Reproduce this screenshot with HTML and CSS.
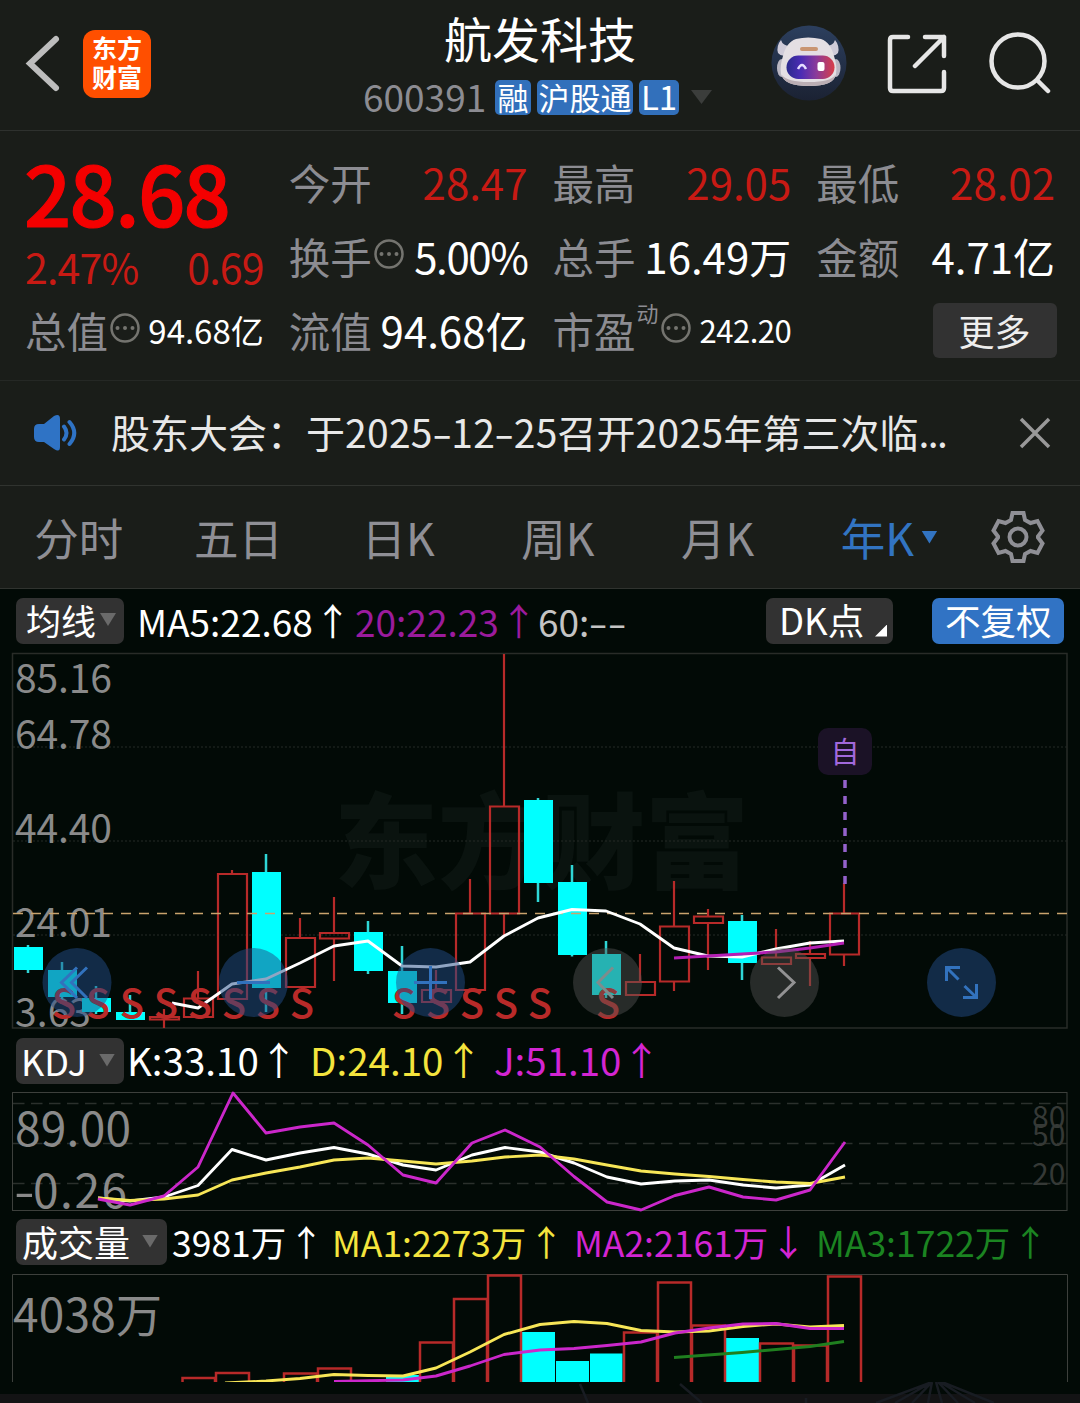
FILE: index.html
```html
<!DOCTYPE html>
<html lang="zh-CN">
<head>
<meta charset="utf-8">
<title>航发科技 600391</title>
<link rel="stylesheet" href="styles.css">
</head>
<body>
<header class="topbar">
  <div class="top-left">
    <svg class="back" width="40" height="60" viewBox="0 0 40 60"><path d="M33 6 7 30.500 33 55" fill="none" stroke="#bdbdbd" stroke-width="6" stroke-linecap="round"/></svg>
    <div class="logo"><span>东方</span><span>财富</span></div>
  </div>
  <div class="heading">
    <h1>航发科技</h1>
    <div class="sub"><span class="code">600391</span><span class="tag">融</span><span class="tag wide">沪股通</span><span class="tag level">L1</span><i class="tri"></i></div>
  </div>
  <div class="top-right">
    <svg width="76" height="76" viewBox="0 0 76 76">
      <defs><linearGradient id="visor"><stop offset="0" stop-color="#2b2a8c"/><stop offset=".3" stop-color="#4b2cb4"/><stop offset=".62" stop-color="#8a3a9a"/><stop offset="1" stop-color="#d83e48"/></linearGradient>
      <linearGradient id="halo" x2="0" y2="1"><stop offset="0" stop-color="#2c3f5e"/><stop offset="1" stop-color="#1b2233"/></linearGradient></defs>
      <circle cx="38" cy="38" r="37.500" fill="url(#halo)"/>
      <path d="M10 15Q5 21 7 28q3 4 10 2l5-9Q12 22 10 15zM64 15q5 6 3 13-3 4-10 2l-5-9q10 1 12-6z" fill="#cfcbd8"/>
      <ellipse cx="10.500" cy="43" rx="4.500" ry="9" fill="#b9b6c2"/><ellipse cx="65" cy="43" rx="4.500" ry="9" fill="#b9b6c2"/>
      <path d="M25 14q12-3 25 0c7 2 11 9 13 17 2 6 3 12 2 18-1 8-10 12-27 12S12 57 10 49c-1-6 0-12 2-18 2-8 6-15 13-17z" fill="#e4dfe3"/>
      <path d="M11 50q5 7 27 7t26-7q-1 11-26 11T11 50z" fill="#bbaeb4"/>
      <rect x="29" y="22" width="18" height="4" rx="2" fill="#c99572"/>
      <rect x="15.500" y="30.500" width="48" height="23.500" rx="11.700" fill="url(#visor)"/>
      <path d="M27 44q4-8 8 0" fill="none" stroke="#e6dcff" stroke-width="2.500"/><rect x="46.500" y="37" width="7" height="9" rx="2" fill="#fff"/>
    </svg>
    <svg width="62" height="62" viewBox="0 0 62 62" fill="none" stroke="#e6e6e6" stroke-width="4.500" stroke-linecap="round" stroke-linejoin="round"><path d="M23 5H8Q5 5 5 8V56Q5 59 8 59H56Q59 59 59 56V40M40 5H59V24M30 34 59 5"/></svg>
    <svg width="64" height="64" viewBox="0 0 64 64" fill="none" stroke="#e6e6e6" stroke-width="4.500" stroke-linecap="round"><circle cx="31" cy="30" r="26.500"/><path d="M51 50 61 60"/></svg>
  </div>
</header>

<section class="quote">
  <div class="col">
    <div class="price">28.68</div>
    <div class="row change"><span>2.47%</span><span>0.69</span></div>
    <div class="row"><span class="label">总值</span><svg class="dots" viewBox="0 0 30 30"><circle cx="15" cy="15" r="13.500"/><path d="M7.500 15h.01M15 15h.01M22.500 15h.01"/></svg><b class="small">94.68亿</b></div>
  </div>
  <div class="col">
    <div class="row"><span class="label">今开</span><b class="up">28.47</b></div>
    <div class="row"><span class="label">换手</span><svg class="dots" viewBox="0 0 30 30"><circle cx="15" cy="15" r="13.500"/><path d="M7.500 15h.01M15 15h.01M22.500 15h.01"/></svg><b class="pct">5.00%</b></div>
    <div class="row"><span class="label">流值</span><b>94.68亿</b></div>
  </div>
  <div class="col">
    <div class="row"><span class="label">最高</span><b class="up">29.05</b></div>
    <div class="row"><span class="label">总手</span><b>16.49万</b></div>
    <div class="row"><span class="label">市盈</span><sup>动</sup><svg class="dots" viewBox="0 0 30 30"><circle cx="15" cy="15" r="13.500"/><path d="M7.500 15h.01M15 15h.01M22.500 15h.01"/></svg><b class="pe">242.20</b></div>
  </div>
  <div class="col">
    <div class="row"><span class="label">最低</span><b class="up">28.02</b></div>
    <div class="row"><span class="label">金额</span><b>4.71亿</b></div>
    <div class="row last"><button class="more">更多</button></div>
  </div>
</section>

<section class="news">
  <svg width="46" height="40" viewBox="0 0 46 40"><path d="M6 11H11L21 3Q27 0 27 6V34Q27 40 21 36L11 29H6Q1 29 1 24V16Q1 11 6 11Z" fill="#2f73c5"/><path d="M31 13.500Q36 20 31 26.500M36.500 9Q46 20 36.500 31" fill="none" stroke="#2f73c5" stroke-width="4" stroke-linecap="round"/></svg>
  <p>股东大会：于<span class="num">2025<i>-</i>12<i>-</i>25</span>召开<span class="num">2025</span>年第三次临<span class="ell">...</span></p>
  <svg width="34" height="34" viewBox="0 0 34 34"><path d="M3 3 31 31M31 3 3 31" stroke="#999" stroke-width="3.500"/></svg>
</section>

<nav class="tabs">
  <span>分时</span><span>五日</span><span>日K</span><span>周K</span><span>月K</span><span class="active">年K<i class="tri"></i></span>
  <div class="gear"><svg width="56" height="56" viewBox="0 0 56 56" fill="none" stroke="#8f8f95" stroke-width="4"><path d="M22.500 4H33.500L35 11 40.500 14 47.500 12 52.500 21.500 48 27.500V28.500L52.500 34.500 47.500 44 40.500 42 35 45 33.500 52H22.500L21 45 15.500 42 8.500 44 3.500 34.500 8 28.500V27.500L3.500 21.500 8.500 12 15.500 14 21 11Z"/><circle cx="28" cy="28" r="8.500"/></svg></div>
</nav>

<main class="charts">
  <div class="legend ma">
    <button class="chip">均线<i class="tri"></i></button>
    <span class="white">MA5:22.68<em>↑</em></span><span class="violet">20:22.23<em>↑</em></span><span class="grey">60:<i class="hy">-</i><i class="hy">-</i></span>
    <button class="chip dk">DK点<i class="corner"></i></button>
    <button class="chip blue">不复权</button>
  </div>
  <svg class="plot open" width="1080" height="382" viewBox="0 652 1080 382">
    <text x="334" y="881" class="mark" textLength="415">东方财富</text>
    <rect x="12.500" y="653.500" width="1054.500" height="374.500" class="frame"/>
    <path d="M13 747H1067M13 841H1067M13 935H1067" class="dotted"/>
    <g class="axis"><text x="15" y="692.500" textLength="97">85.16</text><text x="15" y="748.500" textLength="97">64.78</text><text x="15" y="842.500" textLength="97">44.40</text><text x="15" y="936.500" textLength="97">24.01</text><text x="15" y="1027" textLength="76">3.63</text></g>
    <g class="fall-wick"><path d="M28 945V973M62 962V1000M96 986V1014M130 995V1020M266 854V1012M368 921V974M402 946V1014M538 798V902M572 865V956.500M606 941V998M742 915V980"/></g>
    <g class="fall"><path d="M14 947h29v23h-29zM48 970h29v27h-29zM82 998h29v14h-29zM116 1012h29v8h-29zM252 872h29v116h-29zM354 932h29v39h-29zM388 971h29v32h-29zM524 800h29v83h-29zM558 882h29v73h-29zM592 954h29v41h-29zM728 921h29v42h-29z"/></g>
    <g class="rise"><path d="M150 1017h29v2.500h-29zM184 998.500h29v18.500h-29zM218 874h29v125h-29zM286 938h29v49h-29zM320 933h29v5.500h-29zM422 990h29v12h-29zM456 913.500h29v76.500h-29zM490 806.500h29v107h-29zM626 982h29v13h-29zM660 926.500h29v55h-29zM694 916.500h29v6.500h-29zM762 957.500h29v6.500h-29zM796 954h29v4h-29zM830 913.500h29v41h-29z"/>
    <path d="M164 1009V1017M164 1020V1028M198 971V998M232 870V874M300 918V938M334 897V933M334 939V981M436 970V990M470 879V913M504 654V806M504 914V937M640 954V982M674 881V926M674 982V991M708 909V916M708 923V970M776 929V957M810 941V954M810 958V986M844 883V913M844 955V966"/></g>
    <path d="M13 913.500H1067" class="last-price"/>
    <path d="M172 1003 198 1008 232 984 266 979 300 963 334 946 368 941 402 966 436 967 470 962 504 936 538 918 572 909.500 606 911 640 924 674 948 708 956 742 957 776 949 810 943 844 941" class="line white-line"/>
    <path d="M674 958 708 956 742 954 776 952 810 948 844 943" class="line violet-line"/>
    <g class="sig"><text x="64" y="1018">S</text><text x="98" y="1018">S</text><text x="132" y="1018">S</text><text x="166" y="1018">S</text><text x="200" y="1018">S</text><text x="234" y="1018">S</text><text x="268" y="1018">S</text><text x="302" y="1018">S</text><text x="404" y="1018">S</text><text x="438" y="1018">S</text><text x="472" y="1018">S</text><text x="506" y="1018">S</text><text x="540" y="1018">S</text><text x="608" y="1018">S</text></g>
    <rect x="818" y="728" width="54" height="47" rx="10" fill="#1b1226"/>
    <text x="845" y="763" class="self">自</text>
    <path d="M845 780V884" stroke="#9462cc" stroke-width="3.500" stroke-dasharray="8 8"/>
    <g fill="#224c87" fill-opacity=".5"><circle cx="77" cy="982.500" r="34.500"/><circle cx="253.500" cy="982.500" r="34.500"/><circle cx="430.500" cy="982.500" r="34.500"/><circle cx="961.500" cy="982.500" r="34.500"/></g>
    <g fill="#555" fill-opacity=".45"><circle cx="607.500" cy="982.500" r="34.500"/><circle cx="784.500" cy="982.500" r="34.500"/></g>
    <g fill="none" stroke="#3272bd" stroke-width="3"><path d="M77 967.500 61.500 982.500 77 998M87 967.500 71.500 982.500 87 998M237 982.500H270M414 982.500H447M430.500 966V999"/><path d="M946.500 981V967.500H960M946.500 967.500 958.500 979.500M963 997.500H976.500V984M976.500 997.500 964.500 986" stroke-width="3"/></g>
    <path d="M613 967.500 598 982.500 613 998" fill="none" stroke="#7e8d8d" stroke-width="3"/><path d="M778 967.500 794 982.500 778 998" fill="none" stroke="#929293" stroke-width="3"/>
  </svg>

  <div class="legend kdj">
    <button class="chip">KDJ<i class="tri"></i></button>
    <span class="white">K:33.10<em>↑</em></span><span class="yellow">D:24.10<em>↑</em></span><span class="pink">J:51.10<em>↑</em></span>
  </div>
  <svg class="plot open" width="1080" height="126" viewBox="0 1088 1080 126">
    <rect x="12.500" y="1092.500" width="1054.500" height="118" class="frame bright"/>
    <path d="M13 1103.500H1067M13 1143.500H1067M13 1183.500H1067" class="dash"/>
    <g class="axis big"><text x="15" y="1145.500" textLength="116">89.00</text><text x="33" y="1208" textLength="94">0.26</text><text transform="translate(14 1208) scale(1.300 1)">-</text></g>
    <g class="axis level"><text x="1032" y="1128">80</text><text x="1032" y="1146">50</text><text x="1032" y="1185">20</text></g>
    <path d="M98 1198 130 1201 164 1197 198 1185.500 232 1149.500 266 1160 300 1153 334 1147.500 368 1154 403 1165 436 1170 472 1155 505 1147.500 540 1152 574 1163 607 1177 641 1184 675 1181 709 1180 743 1185 776 1188 810 1185 845 1165" class="line white-line"/>
    <path d="M98 1198 130 1200.500 164 1199 198 1195 232 1180 266 1173 300 1167 334 1160 368 1158 403 1161 436 1164 472 1161 505 1157 540 1155 574 1159 607 1165 641 1171 675 1174 709 1176.500 743 1179.500 776 1182 810 1183.500 845 1177" class="line yellow-line"/>
    <path d="M98 1199 130 1205 164 1196 198 1167 233 1093 266 1133 300 1127 334 1123 368 1145 403 1175 436 1183 472 1143 505 1130 540 1147 574 1176.500 607 1202 641 1210 675 1195.500 709 1187 743 1197 776 1200 810 1190 845 1142" class="line pink-line"/>
  </svg>

  <div class="legend vol">
    <button class="chip">成交量<i class="tri"></i></button>
    <span class="white">3981万<em>↑</em></span><span class="yellow">MA1:2273万<em>↑</em></span><span class="pink">MA2:2161万<em>↓</em></span><span class="green">MA3:1722万<em>↑</em></span>
  </div>
  <svg class="plot" width="1080" height="112" viewBox="0 1270 1080 112">
    <path d="M12.500 1390V1274.500H1067.500V1390" class="frame bright"/>
    <g class="axis big"><text x="13" y="1331.500" textLength="149">4038万</text></g>
    <path d="M386 1375h33v9h-33zM522 1332h33v52h-33zM556 1361h33v23h-33zM590 1353.500h32.500v30h-32.500zM726 1338h33v46h-33z" fill="#0ff"/>
    <path d="M182.500 1390V1378H215V1390M216 1390V1373H249V1390M284 1390V1373.500H317V1390M318 1390V1368.500H351V1390M420 1390V1342.500H453V1390M454 1390V1299H487V1390M488 1390V1275.500H521V1390M624 1390V1332.500H657V1390M658 1390V1282.500H691V1390M692 1390V1325.500H725V1390M760 1390V1343.500H793V1390M794 1390V1345.500H827V1390M828 1390V1276.500H861V1390" class="rise vol-bars"/>
    <path d="M225 1383 266 1381 300 1378.500 334 1374.500 368 1375.500 403 1376 436 1368 470 1352 504 1334.500 540 1324.500 574 1321.500 607 1323.500 641 1330.500 675 1332 709 1331 743 1326.500 776 1324 810 1327 844 1325.500" class="line yellow-line"/>
    <path d="M334 1381.500 403 1380 436 1376 470 1366 504 1354.500 540 1350 574 1348.500 607 1345.500 641 1342 675 1333 709 1328 743 1324 776 1323.500 810 1328.500 844 1328.500" class="line pink-line"/>
    <path d="M674 1357.500 742 1352.500 810 1346.500 844 1341.500" class="line green-line"/>
  </svg>
  <svg class="plot" width="1080" height="21" viewBox="0 1382 1080 21"><path d="M0 1394H1080V1403H0z" fill="#131314"/><path d="M580 1384 588 1403M680 1384 702 1403M932 1382 876 1403M932 1382 895 1403M932 1382 912 1403M932 1382 928 1403M936 1382 942 1403M938 1382 958 1403M940 1382 975 1403M942 1382 994 1403M806 1398V1403" stroke="#181c22" stroke-width="2.500"/></svg>
</main>
</body>
</html>
```
FILE: styles.css
```css
* { box-sizing: border-box; }
body { margin: 0; width: 1080px; background: #1a1d19; color: #fff; font-family: "Noto Sans CJK SC", "Noto Sans", sans-serif; overflow: hidden; }
h1, p { margin: 0; font-weight: 400; }
svg { display: block; flex: none; }
i, em { font-style: normal; }
button { border: 0; padding: 0; color: inherit; font: inherit; }
.tri { display: block; flex: none; width: 16px; height: 13px; background: #6a6a6a; clip-path: polygon(0 0, 100% 0, 50% 100%); }

.topbar { height: 131px; border-bottom: 1px solid #2e312e; display: grid; grid-template-columns: 360px 360px 360px; }
.top-left { display: flex; padding: 30px 0 0 23px; gap: 20px; }
.back { margin-top: 3px; }
.logo { width: 68px; height: 68px; border-radius: 12px; background: #ff4f00; display: flex; flex-direction: column; align-items: center; padding-top: 3px; font-size: 25px; font-weight: 700; line-height: 29px; }
.heading { padding-top: 11px; }
.heading h1 { font-size: 48px; line-height: 53px; text-align: center; }
.sub { display: flex; align-items: center; height: 36px; margin-top: 15px; padding-left: 3px; line-height: 36px; }
.code { width: 132px; color: #8c8c92; font-size: 37px; line-height: 32px; margin-top: -2px; }
.tag { width: 36px; height: 35px; line-height: 33px; border-radius: 5px; background: #3270bb; font-size: 31px; text-align: center; margin-right: 6px; }
.tag.wide { width: 96px; }
.tag.level { width: 40px; font-size: 33px; }
.sub .tri { width: 21px; height: 14px; margin-left: 6px; background: #3b3d3b; }
.top-right { display: flex; align-items: flex-start; padding-left: 51px; }
.top-right svg:nth-child(1) { margin-top: 25px; }
.top-right svg:nth-child(2) { margin: 32px 0 0 37.500px; }
.top-right svg:nth-child(3) { margin: 31px 0 0 40.500px; }

.quote { height: 250px; border-bottom: 1px solid #252825; padding: 15px 25px 0; display: grid; grid-template-columns: repeat(4, 1fr); column-gap: 25px; }
.row { height: 74px; display: flex; align-items: center; justify-content: space-between; font-size: 42px; line-height: 72px; padding-bottom: 2px; white-space: nowrap; }
.row b { font-weight: 400; }
.label { font-size: 41.500px; color: #8c8c92; }
.price { height: 94px; line-height: 90px; font-size: 83px; font-weight: 500; -webkit-text-stroke: 1.200px #f40000; color: #f40000; letter-spacing: -1.800px; margin-left: -1px; }
.change { height: 54px; line-height: 52px; color: #c81a14; font-size: 41px; letter-spacing: -.8px; }
.up { color: #c81a14; }
.dots { width: 30px; height: 30px; margin: -4px 0 0 2px; fill: none; stroke: #74746f; stroke-width: 2.500; stroke-linecap: round; }
.dots path { stroke-width: 4; }
.row .small { margin-left: auto; font-size: 33px; }
.row .pct { margin-left: auto; font-size: 42px; letter-spacing: -1.400px; }
.row .pe { margin-left: auto; font-size: 31px; letter-spacing: -.5px; }
.row sup { font-size: 22px; line-height: 30px; color: #8c8c92; margin: -36px 0 0 1px; }
.last { justify-content: flex-end; }
.more { width: 124px; height: 55px; line-height: 50px; border-radius: 6px; background: #323232; color: #eee; font-size: 36px; margin: 0 -1.500px 0 0; }

.news { height: 105px; border-bottom: 1px solid #30332f; display: flex; align-items: center; padding: 0 28px 0 33px; color: #e8e8e8; }
.news p { flex: 1; padding-left: 32px; font-size: 39px; line-height: 60px; white-space: nowrap; margin-top: -4px; }
.num { letter-spacing: .3px; }
.num i, .hy { display: inline-block; width: 18.500px; text-align: center; transform: scaleX(1.500); letter-spacing: 0; }
.ell { letter-spacing: -1.500px; }

.tabs { height: 103px; display: flex; align-items: center; border-bottom: 1px solid #30332f; color: #8f8f95; }
.tabs > span { width: 159.700px; line-height: 102px; height: 103px; text-align: center; font-size: 44.500px; position: relative; left: -1px; }
.tabs .active { color: #3274c2; }
.active .tri { position: absolute; left: 124px; top: 45px; background: #3274c2; }
.gear { width: 120px; padding-left: 32px; }

.charts { background: #020a06; }
.legend { display: grid; align-items: center; white-space: nowrap; }
.legend > span { display: flex; align-items: center; }
.legend em { width: 30px; display: flex; justify-content: center; transform: translate(5px, -1px); }
.ma { height: 63px; grid-template-columns: 121px 218px 183px 228px 166px 132px; padding-left: 16px; font-size: 37px; line-height: 60px; }
.kdj { height: 54px; grid-template-columns: 111px 183px 184px 200px; padding-left: 16px; font-size: 38.500px; line-height: 50px; }
.kdj > span { margin-top: -4px; }
.vol { height: 56px; grid-template-columns: 156px 160px 242px 242px 260px; padding-left: 16px; font-size: 35.500px; line-height: 54px; }
.chip { width: 108px; height: 46px; border-radius: 7px; background: #323232; color: #fff; font-size: 35px; line-height: 44px; display: flex; align-items: center; padding: 0 0 2px 10px; position: relative; }
.chip .tri { margin-left: 4px; }
.kdj .chip { padding-left: 5px; font-size: 36px; }
.kdj .chip .tri { margin-left: auto; margin-right: 9px; }
.vol .chip { width: 151px; padding-left: 6px; font-size: 36px; }
.vol .chip .tri { margin-left: 12px; }
.ma .dk { width: 127px; padding-left: 13px; font-size: 36.500px; }
.corner { position: absolute; right: 6px; bottom: 7px; width: 12px; height: 12px; background: #fff; clip-path: polygon(100% 0, 100% 100%, 0 100%); }
.ma .blue { width: 132px; padding-left: 13px; background: #3173c4; font-size: 35.500px; }
.white { color: #fff; } .violet { color: #9b1b9d; } .grey { color: #c4c4c4; }
.yellow { color: #f4e43d; } .pink { color: #d325d2; } .green { color: #1b8421; }

.open { overflow: visible; }
.frame { fill: none; stroke: #292c28; stroke-width: 1.500; }
.bright { stroke: #3d403c; stroke-width: 1; }
.dotted { stroke: #252a26; stroke-dasharray: 2 2; }
.dash { stroke: #2b302c; stroke-width: 1.300; stroke-dasharray: 11.500 6.500; }
.last-price { stroke: #c9a36d; stroke-width: 1.300; stroke-dasharray: 10 8; }
.axis { fill: #8a8a8a; font-size: 39px; }
.axis.big { font-size: 46px; }
.axis.level { font-size: 30px; fill: #353936; }
.mark { font-size: 104px; font-weight: 900; fill: #0a130f; }
.fall { fill: #0ff; }
.fall-wick { stroke: #2fd6d6; stroke-width: 2.500; }
.rise { fill: none; stroke: #b72a29; stroke-width: 2.200; }
.line { fill: none; stroke-width: 2.900; stroke-linejoin: round; }
.white-line { stroke: #fff; } .violet-line { stroke: #b41fb4; stroke-width: 3; } .pink-line { stroke: #cb27ca; } .yellow-line { stroke: #f7e657; } .green-line { stroke: #1f7f1f; }
.sig { fill: #b92a29; font-size: 40px; font-weight: 500; text-anchor: middle; }
.self { fill: #a169dc; font-size: 29px; text-anchor: middle; }
.vol-bars { stroke-width: 2.500; }
```
